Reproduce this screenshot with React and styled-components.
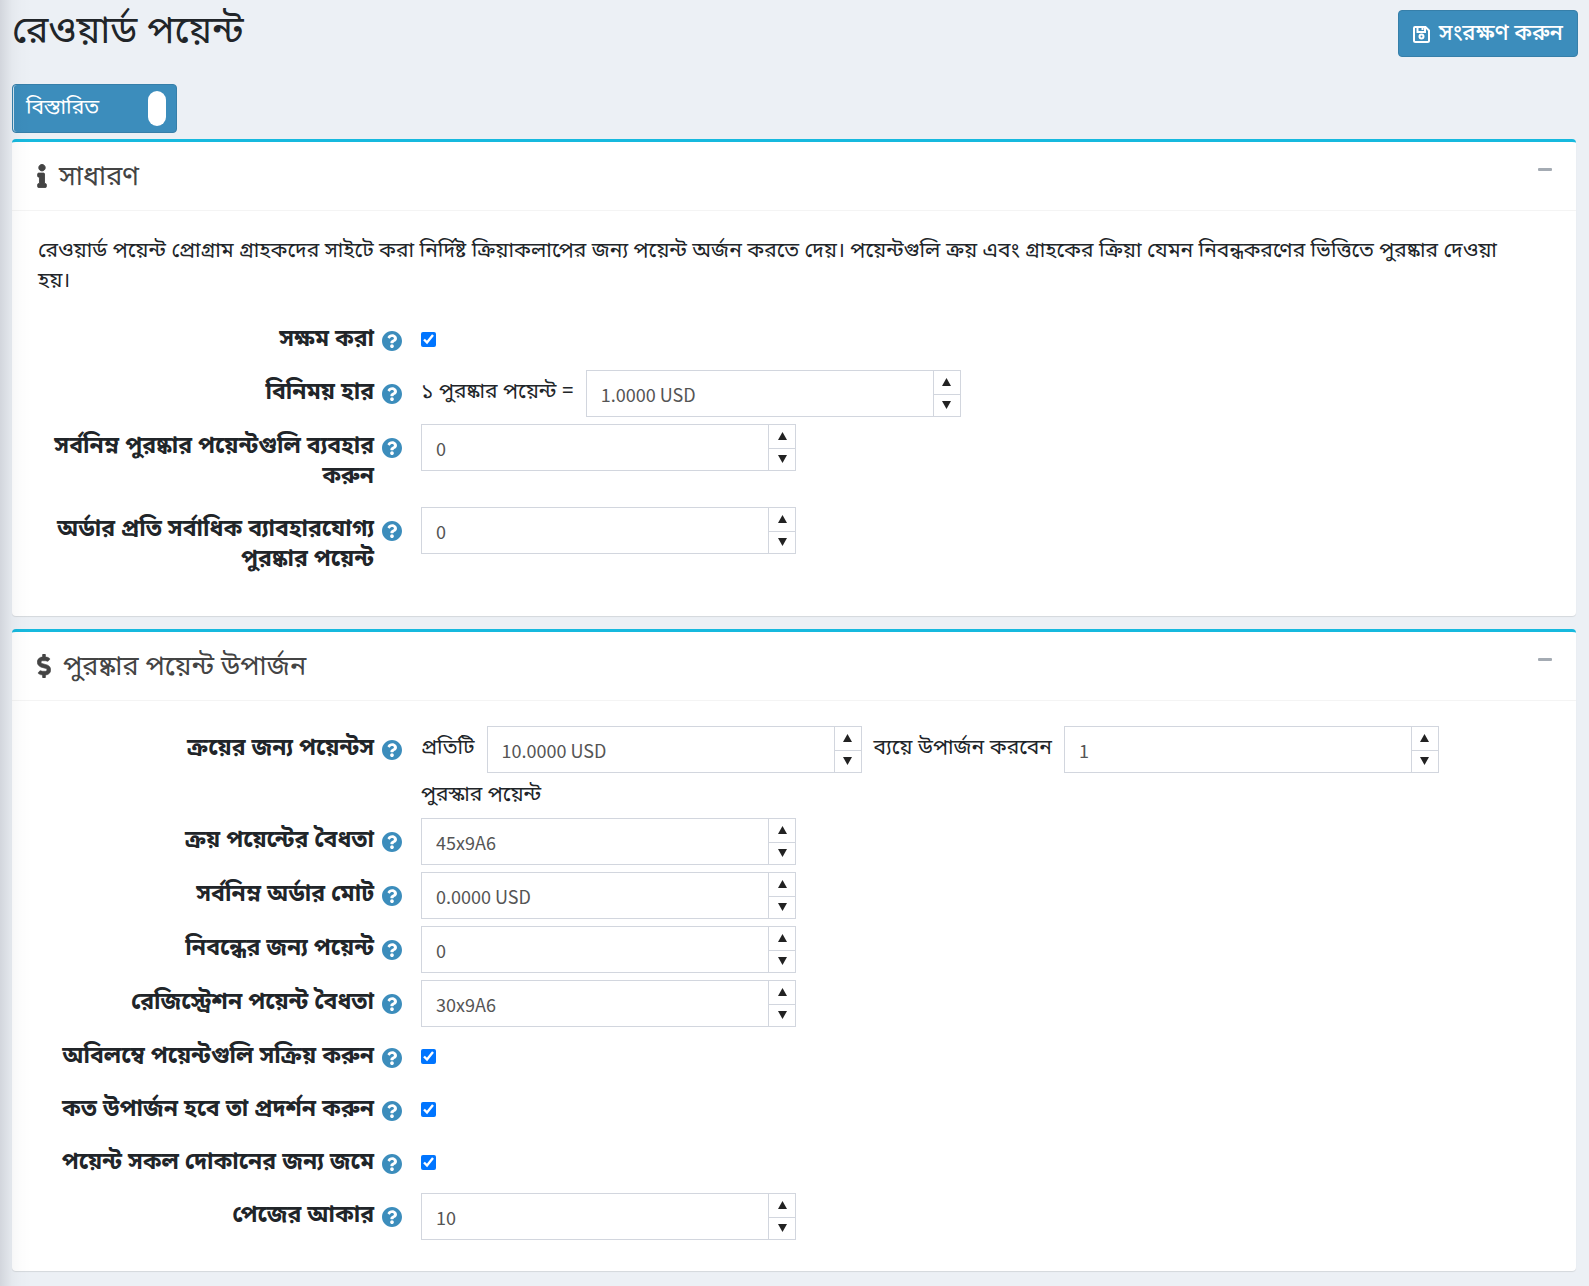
import React, { useState } from "react";
import styled, { createGlobalStyle } from "styled-components";

const bengali = `"Noto Sans Bengali", "Noto Sans", "Noto Sans CJK JP", sans-serif`;
const latin = `"Noto Sans CJK JP", "Noto Sans CJK SC", "Noto Sans", sans-serif`;

const Global = createGlobalStyle`
  *, *::before, *::after { box-sizing: border-box; }
  body {
    margin: 0;
    background: #ecf0f5;
    color: #212529;
    font-family: ${bengali};
    font-size: 21px;
    line-height: 30px;
  }
`;

const Page = styled.main`
  position: relative;
  min-height: 100vh;
  padding: 0 11px 14px 12px;

  &::before {
    content: "";
    position: absolute;
    inset: 0 auto 0 0;
    width: 32px;
    pointer-events: none;
    background: linear-gradient(90deg, rgba(0, 0, 20, 0.11), rgba(0, 0, 20, 0.03) 12px, rgba(0, 0, 20, 0.01) 20px, transparent);
  }
`;

const Header = styled.header`
  display: flex;
  justify-content: space-between;
  align-items: flex-start;
  padding-top: 10px;
  height: 84px;
`;

const Title = styled.h1`
  margin: 0;
  font-size: 38px;
  line-height: 48px;
  font-weight: 400;
`;

const SaveButton = styled.button`
  display: flex;
  align-items: center;
  gap: 9px;
  height: 47px;
  padding: 2px 14px 0;
  border: 1px solid #367fa9;
  border-radius: 4px;
  background: #3c8dbc;
  color: #fff;
  font: 500 22px/30px ${bengali};
`;

const ModeToggle = styled.button`
  display: flex;
  align-items: center;
  justify-content: space-between;
  width: 165px;
  height: 49px;
  padding: 0 10px 0 13px;
  border: 1px solid #367fa9;
  border-radius: 4px;
  background: #3c8dbc;
  box-shadow: inset 1px 0 0 #d5e6f0;
  color: #fff;
  font: 400 21px/30px ${bengali};
`;

const Knob = styled.span`
  width: 18px;
  height: 35px;
  border-radius: 9px;
  background: #fff;
`;

const Panel = styled.section`
  margin: ${(p) => (p.$first ? 6 : 13)}px 2px 0 0;
  border-top: 3px solid #16b9de;
  border-radius: 4px;
  background: #fff;
  box-shadow: 0 1px 1px rgba(0, 0, 0, 0.1);
`;

const PanelHeader = styled.div`
  display: flex;
  align-items: center;
  height: 69px;
  padding: 0 24px 0 25px;
  border-bottom: 1px solid #f4f4f4;
  color: #444;
`;

const PanelTitle = styled.h2`
  flex: 1;
  margin: 0;
  padding: 4px 0 0 12px;
  font-size: 27px;
  line-height: 36px;
  font-weight: 400;
`;

const Collapse = styled.button`
  align-self: flex-start;
  display: flex;
  align-items: center;
  height: 54px;
  padding: 0;
  border: 0;
  background: none;
  color: #a4abb3;
`;

const PanelBody = styled.div`
  display: grid;
  gap: 7px;
  padding: ${(p) => (p.$intro ? "26px 0 33px" : "25px 0 31px")};
`;

const Intro = styled.p`
  margin: 0;
  padding: 0 48px 13px 26px;
`;

const Row = styled.div`
  display: grid;
  grid-template-columns: 1fr 3fr;
  align-items: start;
  min-height: ${(p) => (p.$check ? 46 : 47)}px;
`;

const LabelCell = styled.div`
  display: flex;
  justify-content: flex-end;
  gap: 8px;
  padding: 8px 1px ${(p) => (p.$tall ? 8 : 0)}px 26px;
  text-align: right;
`;

const Label = styled.label`
  font-size: 23px;
  font-weight: 700;
`;

const Help = styled.svg`
  flex: none;
  width: 20px;
  height: 20px;
  margin-top: 6px;
`;

const ValueCell = styled.div`
  display: flex;
  flex-wrap: wrap;
  column-gap: 12px;
  align-items: flex-start;
  padding: 0 18px;
`;

const Inline = styled.span`
  padding-top: 8px;
`;

const Check = styled.input`
  width: 15px;
  height: 15px;
  margin: 15px 0 0;
  accent-color: #0075ff;
`;

const Spin = styled.div`
  display: flex;
  width: 375px;
  height: 47px;
  border: 1px solid #d2d6de;
  background: #fff;
`;

const SpinInput = styled.input`
  flex: 1;
  min-width: 0;
  padding: 0 14px;
  border: 0;
  outline: 0;
  background: none;
  color: #555;
  font: 400 18px/28px ${latin};
`;

const Steps = styled.div`
  display: grid;
  grid-template-rows: 1fr 1fr;
  width: 27px;
  border-left: 1px solid #d2d6de;
`;

const Step = styled.button`
  display: flex;
  align-items: center;
  justify-content: center;
  padding: 0;
  border: 0;
  background: none;
  color: #222;

  & + & {
    border-top: 1px solid #d2d6de;
  }
`;

const HelpIcon = () => (
  <Help viewBox="8 8 496 496" aria-hidden="true">
    <path
      fill="#3c8dbc"
      d="M504 256c0 137-111 248-248 248S8 393 8 256C8 119.100 119 8 256 8s248 111.100 248 248zM262.700 90c-54.500 0-89.300 23-116.500 63.800-3.500 5.300-2.400 12.400 2.700 16.300l34.700 26.300c5.200 3.900 12.600 3 16.700-2.100 17.900-22.700 30.100-35.800 57.300-35.800 20.400 0 45.700 13.100 45.700 33 0 15-12.400 22.700-32.500 34C247.100 238.500 216 254.900 216 296v4c0 6.600 5.400 12 12 12h56c6.600 0 12-5.400 12-12v-1.300c0-28.500 83.200-29.600 83.200-106.700 0-58-60.200-102-116.500-102zM256 338c-25.400 0-46 20.600-46 46 0 25.400 20.600 46 46 46s46-20.600 46-46c0-25.400-20.600-46-46-46z"
    />
  </Help>
);

const InfoIcon = () => (
  <svg width="10" height="24" viewBox="-10 -10 212 532" aria-hidden="true">
    <path
      fill="currentColor"
      stroke="currentColor"
      strokeWidth="20"
      d="M20 424.200h20V279.800H20c-11 0-20-9-20-20V212c0-11 9-20 20-20h112c11 0 20 9 20 20v212.200h20c11 0 20 9 20 20V492c0 11-9 20-20 20H20c-11 0-20-9-20-20v-47.800c0-11 9-20 20-20zM96 0C56.200 0 24 32.200 24 72s32.200 72 72 72 72-32.200 72-72S135.800 0 96 0z"
    />
  </svg>
);

const DollarIcon = () => (
  <svg width="14" height="24" viewBox="0 0 288 512" aria-hidden="true">
    <path
      fill="currentColor"
      stroke="currentColor"
      strokeWidth="12"
      d="M209.200 233.400l-108-31.600C88.700 198.200 80 186.500 80 173.500c0-16.300 13.200-29.500 29.500-29.500h66.300c12.200 0 24.200 3.700 34.200 10.500 6.100 4.100 14.300 3.100 19.500-2l34.800-34c7.100-6.900 6.100-18.400-1.800-24.500C238 74.800 207.400 64.100 176 64V16c0-8.800-7.200-16-16-16h-32c-8.800 0-16 7.200-16 16v48h-2.500C45.800 64-5.400 118.700.5 183.600c4.200 46.100 39.400 83.600 83.800 96.600l102.500 30c12.500 3.700 21.200 15.300 21.200 28.300 0 16.300-13.200 29.500-29.500 29.500h-66.300C100 368 88 364.300 78 357.500c-6.100-4.100-14.300-3.100-19.500 2l-34.800 34c-7.100 6.900-6.100 18.400 1.800 24.500 24.500 19.200 55.100 29.900 86.500 30v48c0 8.800 7.200 16 16 16h32c8.800 0 16-7.200 16-16v-48.200c46.600-.9 90.300-28.600 105.700-72.700 21.500-61.600-14.600-124.800-72.500-141.700z"
    />
  </svg>
);

const SaveIcon = () => (
  <svg width="17" height="17" viewBox="0 0 17 17" fill="none" stroke="currentColor" strokeWidth="2" aria-hidden="true">
    <path d="M2 1h10.500L16 4.500v10a1.500 1.500 0 0 1-1.500 1.500h-12A1.500 1.500 0 0 1 1 14.500V2a1 1 0 0 1 1-1z" />
    <path d="M4.500 1v5h7.500V1" />
    <path d="M9.500 1v3" />
    <circle cx="8.500" cy="10.500" r="2" />
  </svg>
);

const Arrow = ({ down }) => (
  <svg width="9" height="8" viewBox="0 0 9 8" aria-hidden="true">
    <path fill="currentColor" d={down ? "M0 0h9L4.500 8z" : "M0 8h9L4.500 0z"} />
  </svg>
);

const MinusIcon = () => (
  <svg width="14" height="4" viewBox="0 0 14 4" aria-hidden="true">
    <rect width="14" height="3" y="1" rx="1" fill="currentColor" />
  </svg>
);

function NumberBox({ id, initial, label }) {
  const [value, setValue] = useState(initial);
  return (
    <Spin>
      <SpinInput id={id} aria-label={label} value={value} onChange={(e) => setValue(e.target.value)} />
      <Steps>
        <Step type="button"><Arrow /></Step>
        <Step type="button"><Arrow down /></Step>
      </Steps>
    </Spin>
  );
}

function Field({ id, label, check, tall, value, children }) {
  return (
    <Row $check={check}>
      <LabelCell $tall={tall}>
        <Label htmlFor={id}>{label}</Label>
        <HelpIcon />
      </LabelCell>
      <ValueCell>
        {check && <Check id={id} type="checkbox" defaultChecked />}
        {value !== undefined && <NumberBox id={id} initial={value} />}
        {children}
      </ValueCell>
    </Row>
  );
}

export default function App() {
  return (
    <Page>
      <Global />
      <Header>
        <Title>রেওয়ার্ড পয়েন্ট</Title>
        <SaveButton type="button"><SaveIcon />সংরক্ষণ করুন</SaveButton>
      </Header>
      <ModeToggle type="button" aria-pressed="true">বিস্তারিত<Knob /></ModeToggle>

      <Panel $first>
        <PanelHeader>
          <InfoIcon />
          <PanelTitle>সাধারণ</PanelTitle>
          <Collapse type="button"><MinusIcon /></Collapse>
        </PanelHeader>
        <PanelBody $intro>
          <Intro>
            রেওয়ার্ড পয়েন্ট প্রোগ্রাম গ্রাহকদের সাইটে করা নির্দিষ্ট ক্রিয়াকলাপের জন্য পয়েন্ট অর্জন করতে দেয়। পয়েন্টগুলি ক্রয় এবং গ্রাহকের ক্রিয়া যেমন নিবন্ধকরণের ভিত্তিতে পুরষ্কার দেওয়া হয়।
          </Intro>
          <Field id="enabled" label="সক্ষম করা" check />
          <Field id="rate" label="বিনিময় হার">
            <Inline>১ পুরষ্কার পয়েন্ট =</Inline>
            <NumberBox id="rate" initial="1.0000 USD" />
          </Field>
          <Field id="min-use" label="সর্বনিম্ন পুরষ্কার পয়েন্টগুলি ব্যবহার করুন" value="0" tall />
          <Field id="max-use" label="অর্ডার প্রতি সর্বাধিক ব্যাবহারযোগ্য পুরষ্কার পয়েন্ট" value="0" tall />
        </PanelBody>
      </Panel>

      <Panel>
        <PanelHeader>
          <DollarIcon />
          <PanelTitle>পুরষ্কার পয়েন্ট উপার্জন</PanelTitle>
          <Collapse type="button"><MinusIcon /></Collapse>
        </PanelHeader>
        <PanelBody>
          <Field id="purchase" label="ক্রয়ের জন্য পয়েন্টস">
            <Inline>প্রতিটি</Inline>
            <NumberBox id="purchase" initial="10.0000 USD" />
            <Inline>ব্যয়ে উপার্জন করবেন</Inline>
            <NumberBox id="purchase-points" initial="1" label="পুরস্কার পয়েন্ট" />
            <Inline>পুরস্কার পয়েন্ট</Inline>
          </Field>
          <Field id="validity" label="ক্রয় পয়েন্টের বৈধতা" value="45x9A6" />
          <Field id="min-total" label="সর্বনিম্ন অর্ডার মোট" value="0.0000 USD" />
          <Field id="registration" label="নিবন্ধের জন্য পয়েন্ট" value="0" />
          <Field id="reg-validity" label="রেজিস্ট্রেশন পয়েন্ট বৈধতা" value="30x9A6" />
          <Field id="activate" label="অবিলম্বে পয়েন্টগুলি সক্রিয় করুন" check />
          <Field id="display" label="কত উপার্জন হবে তা প্রদর্শন করুন" check />
          <Field id="all-stores" label="পয়েন্ট সকল দোকানের জন্য জমে" check />
          <Field id="page-size" label="পেজের আকার" value="10" />
        </PanelBody>
      </Panel>
    </Page>
  );
}
